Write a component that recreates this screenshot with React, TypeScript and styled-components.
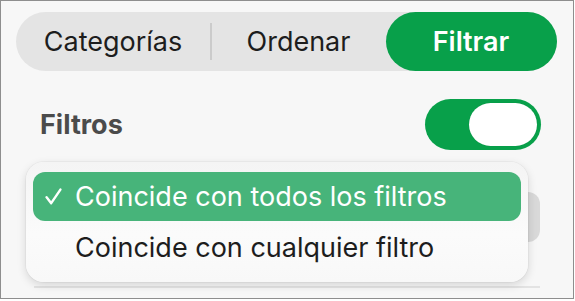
import styled, { createGlobalStyle } from 'styled-components'

const GlobalStyles = createGlobalStyle`
  html, body {
    margin: 0;
    padding: 0;
    background: #ffffff;
  }
  * {
    box-sizing: border-box;
  }
  body {
    font-family: Inter, 'Noto Sans', sans-serif;
    -webkit-font-smoothing: antialiased;
  }
`

const Frame = styled.div`
  position: relative;
  width: 574px;
  height: 299px;
  border: 1px solid #8e8e8e;
  background: #f7f7f7;
  overflow: hidden;
  display: flex;
  flex-direction: column;
`

const Segmented = styled.div`
  margin: 11px 0 0 15px;
  width: 541px;
  height: 59px;
  border-radius: 30px;
  background: #e4e4e4;
  display: flex;
  align-items: center;
`

const Segment = styled.div<{ $width: number; $active?: boolean }>`
  width: ${({ $width }) => $width}px;
  height: 100%;
  display: flex;
  align-items: center;
  justify-content: center;
  border-radius: 30px;
  font-size: 27px;
  font-weight: ${({ $active }) => ($active ? 600 : 400)};
  color: ${({ $active }) => ($active ? '#ffffff' : '#1d1d1d')};
  background: ${({ $active }) => ($active ? '#08a04a' : 'transparent')};
`

const Divider = styled.div`
  width: 1.5px;
  height: 37px;
  background: #cbcbcb;
`

const FilterRow = styled.div`
  margin-top: 28px;
  padding: 0 32px 0 39px;
  height: 51px;
  display: flex;
  align-items: center;
  justify-content: space-between;
`

const RowLabel = styled.div`
  font-size: 27px;
  font-weight: 700;
  color: #4b4b4b;
`

const Toggle = styled.div`
  width: 116px;
  height: 51px;
  border-radius: 26px;
  background: #08a04a;
  display: flex;
  align-items: center;
  justify-content: flex-end;
  padding-right: 4px;
`

const Knob = styled.div`
  width: 68px;
  height: 43px;
  border-radius: 22px;
  background: #ffffff;
  box-shadow: 0 0 1px rgba(0, 0, 0, 0.15);
`

const Behind = styled.div`
  margin: 42px 33px 0 33px;
  height: 50px;
  border-radius: 12px;
  background: #d9d9d9;
`

const BottomRule = styled.div`
  margin: 44px 33px 0 33px;
  height: 2px;
  background: #e3e3e3;
`

const Menu = styled.div`
  position: absolute;
  left: 25px;
  top: 161px;
  width: 502px;
  height: 120px;
  border-radius: 18px;
  background: linear-gradient(#f4f4f4, #fbfbfb 60%, #f8f8f8);
  box-shadow: 0 3px 10px rgba(0, 0, 0, 0.14), 0 0 0 1px rgba(0, 0, 0, 0.03);
  padding: 10px 7px;
  display: flex;
  flex-direction: column;
  gap: 2px;
`

const MenuItem = styled.div<{ $selected?: boolean }>`
  height: 50px;
  border-radius: 12px;
  display: flex;
  align-items: center;
  padding-left: 12px;
  font-size: 27px;
  color: ${({ $selected }) => ($selected ? '#ffffff' : '#1d1d1d')};
  background: ${({ $selected }) => ($selected ? '#47b47a' : 'transparent')};
`

const CheckSlot = styled.span`
  width: 30px;
  display: flex;
  align-items: center;
`

const Check = () => (
  <svg width="17" height="17" viewBox="0 0 17 17" fill="none">
    <path
      d="M1.6 9.2 L6.2 15.2 L15.4 1.6"
      stroke="#ffffff"
      strokeWidth="2.4"
      strokeLinecap="round"
      strokeLinejoin="round"
    />
  </svg>
)

const options = ['Coincide con todos los filtros', 'Coincide con cualquier filtro']

function App() {
  return (
    <>
      <GlobalStyles />
      <Frame>
        <Segmented>
          <Segment $width={194}>Categorías</Segment>
          <Divider />
          <Segment $width={174}>Ordenar</Segment>
          <Segment $width={171} $active>
            Filtrar
          </Segment>
        </Segmented>

        <FilterRow>
          <RowLabel>Filtros</RowLabel>
          <Toggle>
            <Knob />
          </Toggle>
        </FilterRow>

        <Behind />
        <BottomRule />

        <Menu>
          {options.map((opt, i) => (
            <MenuItem key={opt} $selected={i === 0}>
              <CheckSlot>{i === 0 && <Check />}</CheckSlot>
              {opt}
            </MenuItem>
          ))}
        </Menu>
      </Frame>
    </>
  )
}

export default App
